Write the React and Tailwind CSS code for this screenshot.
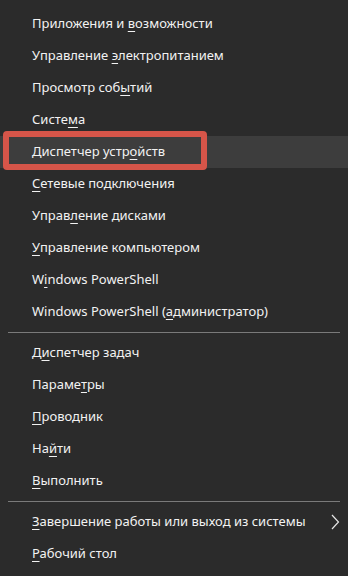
import React from "react";

const groups = [
  [
    ["Приложения и ", "в", "озможности"],
    ["Управление ", "э", "лектропитанием"],
    ["Просмотр соб", "ы", "тий"],
    ["Систе", "м", "а"],
    ["Диспетчер устр", "о", "йств", true],
    ["", "С", "етевые подключения"],
    ["Управ", "л", "ение дисками"],
    ["", "У", "правление компьютером"],
    ["W", "i", "ndows PowerShell"],
    ["Windows PowerShell (", "а", "дминистратор)"],
  ],
  [
    ["Д", "и", "спетчер задач"],
    ["Параме", "т", "ры"],
    ["", "П", "роводник"],
    ["На", "й", "ти"],
    ["", "В", "ыполнить"],
  ],
  [
    ["", "З", "авершение работы или выход из системы", false, true],
    ["", "Р", "абочий стол"],
  ],
];

function Row({ item }) {
  const [a, u, b, active, arrow] = item;
  return (
    <div
      className={
        "relative flex h-[32px] items-center pl-[32px] pr-[8px] " +
        (active ? "bg-[#3d3d3d]" : "")
      }
    >
      <span className="whitespace-nowrap">
        {a}
        <span className="underline decoration-1 underline-offset-[3px]">{u}</span>
        {b}
      </span>
      {arrow && (
        <svg
          className="ml-auto"
          width="10"
          height="18"
          viewBox="0 0 10 18"
          fill="none"
        >
          <path d="M2 2 L8.5 9 L2 16" stroke="#e6e6e6" strokeWidth="1.2" />
        </svg>
      )}
      {active && (
        <div className="pointer-events-none absolute left-[3px] top-[-5px] h-[39px] w-[204px] rounded-[4px] border-[6px] border-[#d65549]" />
      )}
    </div>
  );
}

export default function App() {
  return (
    <div
      className="h-[576px] w-[348px] bg-[#2b2b2b] pt-[8px] text-[13px] text-[#f2f2f2]"
      style={{ fontFamily: '"Noto Sans", "Open Sans", sans-serif' }}
    >
      {groups.map((g, gi) => (
        <div key={gi}>
          {gi > 0 && (
            <div className="my-[4px] ml-[8px] mr-[8px] h-px bg-[#7a7a7a]" />
          )}
          {g.map((item, i) => (
            <Row key={i} item={item} />
          ))}
        </div>
      ))}
    </div>
  );
}
